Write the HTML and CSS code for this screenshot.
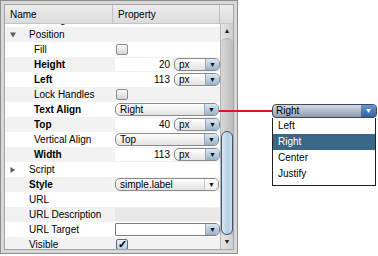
FILE: index.html
```html
<!doctype html>
<html lang="en">
<head>
  <meta charset="utf-8">
  <title>Property sheet</title>
  <link rel="stylesheet" href="styles.css">
</head>
<body>
<div class="panel">
  <div class="grid">
    <div class="header">
      <div class="hname">Name</div>
      <div class="hprop">Property</div>
      <div class="hscroll"></div>
    </div>
    <div class="body">
      <div class="rows">
        <div class="row cut"><div class="name lvl1">Padding</div><div class="val"></div></div>
        <div class="row alt"><div class="name node"><svg class="tri" width="6" height="6" viewBox="0 0 6 6"><path d="M0 0.5H6L3 5.5Z"/></svg><span class="lbl">Position</span></div><div class="val"></div></div>
        <div class="row"><div class="name lvl2">Fill</div><div class="val"><span class="check"></span></div></div>
        <div class="row alt"><div class="name lvl2 b">Height</div><div class="val"><span class="num">20</span><span class="sel unit">px<i class="btn">&#9660;</i></span></div></div>
        <div class="row"><div class="name lvl2 b">Left</div><div class="val"><span class="num">113</span><span class="sel unit">px<i class="btn">&#9660;</i></span></div></div>
        <div class="row alt"><div class="name lvl2">Lock Handles</div><div class="val"><span class="check"></span></div></div>
        <div class="row"><div class="name lvl2 b">Text Align</div><div class="val"><span class="sel wide">Right<i class="btn">&#9660;</i></span></div></div>
        <div class="row alt"><div class="name lvl2 b">Top</div><div class="val"><span class="num">40</span><span class="sel unit">px<i class="btn">&#9660;</i></span></div></div>
        <div class="row"><div class="name lvl2">Vertical Align</div><div class="val"><span class="sel wide">Top<i class="btn">&#9660;</i></span></div></div>
        <div class="row alt"><div class="name lvl2 b">Width</div><div class="val"><span class="num">113</span><span class="sel unit">px<i class="btn">&#9660;</i></span></div></div>
        <div class="row"><div class="name node"><svg class="tri" width="6" height="6" viewBox="0 0 6 6"><path d="M0.5 0V6L5 3Z"/></svg><span class="lbl">Script</span></div><div class="val"></div></div>
        <div class="row alt"><div class="name lvl1 b">Style</div><div class="val"><span class="sel wide plain">simple.label<i class="btn">&#9660;</i></span></div></div>
        <div class="row"><div class="name lvl1">URL</div><div class="val"></div></div>
        <div class="row alt"><div class="name lvl1">URL Description</div><div class="val"><span class="field grey"></span></div></div>
        <div class="row"><div class="name lvl1">URL Target</div><div class="val"><span class="combo"><i class="btn">&#9660;</i></span></div></div>
        <div class="row alt"><div class="name lvl1">Visible</div><div class="val"><span class="check on">&#10003;</span></div></div>
      </div>
      <div class="scrollbar">
        <div class="arrow">&#9650;</div>
        <div class="track"><div class="thumb"></div></div>
        <div class="arrow">&#9660;</div>
      </div>
    </div>
  </div>
</div>

<div class="connector"></div>
<div class="popup">
  <div class="popsel">Right<i class="popbtn">&#9660;</i></div>
  <ul class="list">
    <li>Left</li>
    <li class="picked">Right</li>
    <li>Center</li>
    <li>Justify</li>
  </ul>
</div>
</body>
</html>
```

FILE: styles.css
```css
* {
    margin: 0;
    padding: 0;
    box-sizing: border-box;
}
body {
    background: #fff;
    font-family: "Liberation Sans", Arial, sans-serif;
    font-size: 10px;
    color: #000;
}
.panel {
    width: 238px;
    height: 254px;
    border: 1px solid #8e8e8e;
    background: #d8d8d8;
    padding: 3px;
}
.grid {
    height: 100%;
    border: 1px solid #a4a4a4;
    display: flex;
    flex-direction: column;
    background: #fff;
}
.header {
    height: 19px;
    display: flex;
    background: linear-gradient(#ececec, #dcdcdc);
    border-bottom: 1px solid #c4c4c4;
}
.hname {
    width: 108px;
    padding: 4px 0 0 5px;
    border-right: 1px solid #c0c0c0;
}
.hprop {
    width: 107px;
    padding: 4px 0 0 5px;
    border-right: 1px solid #c0c0c0;
}
.hscroll {
    flex: 1;
}
.body {
    flex: 1;
    display: flex;
    overflow: hidden;
}
.rows {
    width: 215px;
    overflow: hidden;
}
.row {
    height: 15px;
    display: flex;
    align-items: center;
    background: #fff;
}
.row.alt {
    background: #f2f2f2;
}
.row.cut {
    margin-top: -12px;
}
.name {
    width: 108px;
    display: flex;
    align-items: center;
    padding-left: 24px;
    white-space: nowrap;
}
.name.lvl2 {
    padding-left: 29px;
}
.name.node {
    padding-left: 5px;
}
.b {
    font-weight: bold;
}
.tri {
    flex-shrink: 0;
    margin-right: 13px;
    fill: #5c5c5c;
}
.val {
    width: 107px;
    display: flex;
    align-items: center;
    padding-left: 2px;
    gap: 2px;
}
.check {
    width: 12px;
    height: 11px;
    margin-left: 1px;
    border: 1px solid #8c8c8c;
    border-radius: 2px;
    background: linear-gradient(#fafafa, #d4d4d4);
    font-size: 11px;
    line-height: 9px;
    text-align: center;
    font-weight: bold;
}
.check.on {
    background: linear-gradient(#e8f0f8, #b8cce0);
    border-color: #5a6e88;
}
.num {
    width: 57px;
    height: 13px;
    background: #fff;
    text-align: right;
    padding-right: 2px;
    line-height: 13px;
}
.sel {
    position: relative;
    height: 13px;
    border: 1px solid #8a8a8a;
    border-radius: 5px;
    background: linear-gradient(#ffffff, #e2e2e2);
    padding-left: 4px;
    line-height: 11px;
}
.sel.unit {
    width: 46px;
}
.sel.wide {
    width: 104px;
}
.btn {
    position: absolute;
    right: 0;
    top: 0;
    width: 14px;
    height: 11px;
    border-left: 1px solid #9aa8b8;
    border-radius: 0 4px 4px 0;
    background: linear-gradient(#dce8f4, #98b2cc);
    font-style: normal;
    font-size: 7px;
    line-height: 11px;
    text-align: center;
    color: #111;
}
.sel.plain .btn {
    background: linear-gradient(#ffffff, #ececec);
    border-left-color: #c8c8c8;
}
.field {
    width: 104px;
    height: 13px;
}
.field.grey {
    background: #e8e8e8;
}
.combo {
    position: relative;
    width: 105px;
    height: 13px;
    border: 1px solid #7c7c7c;
    border-radius: 1px 5px 5px 1px;
    background: #fff;
}
.scrollbar {
    flex: 1;
    display: flex;
    flex-direction: column;
    border-left: 1px solid #b4b4b4;
    background: linear-gradient(90deg, #e6e6e6, #cfcfcf);
}
.arrow {
    height: 14px;
    font-size: 7px;
    text-align: center;
    line-height: 14px;
    color: #222;
}
.track {
    flex: 1;
    display: flex;
    flex-direction: column;
    justify-content: flex-end;
    border-top: 1px solid #aaa;
    border-radius: 6px 6px 0 0;
    background: linear-gradient(90deg, #d8d8d8, #bdbdbd);
}
.thumb {
    height: 104px;
    border: 1px solid #3e5670;
    border-radius: 7px;
    background: linear-gradient(90deg, #dce9f6, #b4cde6 60%, #cfe0f0);
}
.connector {
    position: absolute;
    left: 219px;
    top: 110px;
    width: 53px;
    height: 2px;
    background: #e0141e;
}
.popup {
    position: absolute;
    left: 272px;
    top: 104px;
    width: 105px;
}
.popsel {
    position: relative;
    height: 14px;
    border: 1px solid #3a4a5e;
    border-radius: 4px;
    background: linear-gradient(#d4dbe4, #8f9db0);
    padding-left: 3px;
    line-height: 12px;
}
.popbtn {
    position: absolute;
    right: 0;
    top: 0;
    width: 15px;
    height: 12px;
    border-radius: 0 3px 3px 0;
    background: linear-gradient(#6d9ad0, #2f5f9e);
    color: #fff;
    font-style: normal;
    font-size: 7px;
    line-height: 12px;
    text-align: center;
}
.list {
    list-style: none;
    width: 104px;
    border: 1px solid #222;
    border-top: 0;
    background: #fff;
    padding: 0 0 3px;
}
.list li {
    height: 16px;
    line-height: 16px;
    padding-left: 5px;
}
.list li.picked {
    background: #3a6688;
    color: #fff;
}
```
